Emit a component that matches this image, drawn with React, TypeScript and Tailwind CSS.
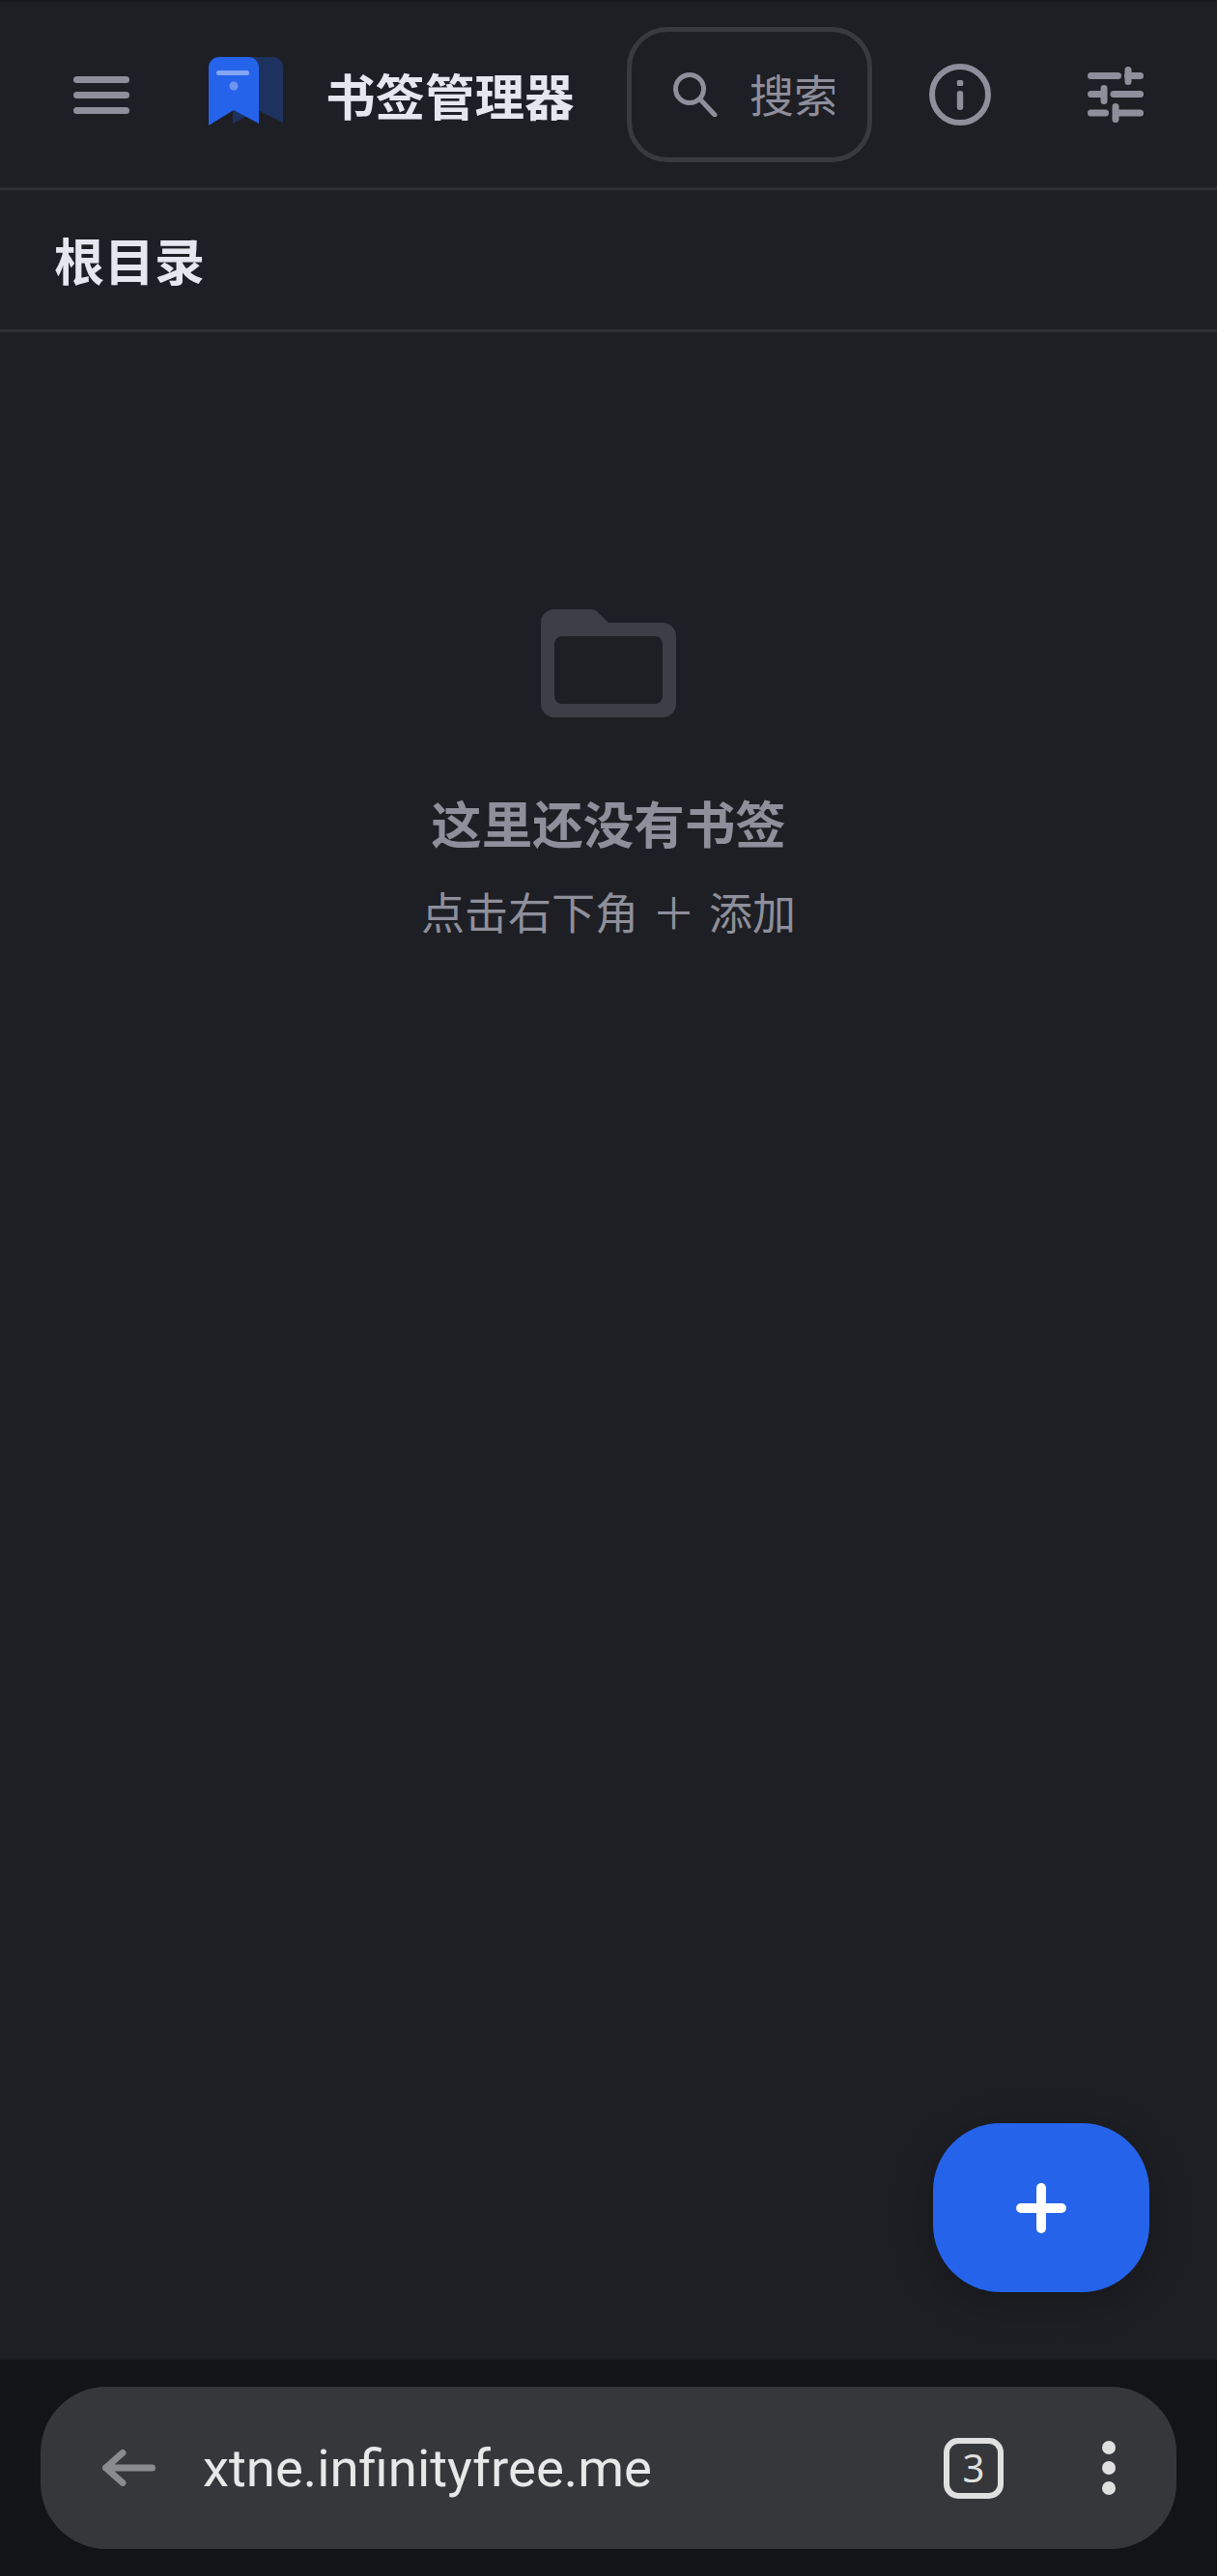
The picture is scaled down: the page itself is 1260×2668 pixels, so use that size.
import { Plus } from 'lucide-react'

const cjk = "font-['Noto_Sans_CJK_SC','Noto_Sans',sans-serif]"

const MenuButton = () => (
  <div className="flex flex-col gap-[9px] w-[58px] shrink-0">
    <div className="h-[7px] rounded-full bg-[#8e8f9b]" />
    <div className="h-[7px] rounded-full bg-[#8e8f9b]" />
    <div className="h-[7px] rounded-full bg-[#8e8f9b]" />
  </div>
)

const Logo = () => (
  <svg width="77" height="71" viewBox="0 0 77 71" className="shrink-0">
    <path d="M25 10A10 10 0 0 1 35 0h32a10 10 0 0 1 10 10v58L51 55 25 69z" fill="#1e3260" />
    <path d="M0 11A11 11 0 0 1 11 0h30a11 11 0 0 1 11 11v58L26 55 0 71z" fill="#2563eb" />
    <rect x="8" y="14" width="34" height="5" rx="2.500" fill="#85a5f5" />
    <circle cx="26" cy="30" r="4.500" fill="#6f94f0" />
  </svg>
)

const SearchIcon = () => (
  <svg width="46" height="46" viewBox="0 0 46 46" fill="none" stroke="#8e8f9b" strokeWidth="5" strokeLinecap="round" className="shrink-0">
    <circle cx="17" cy="17" r="14.500" />
    <path d="M28 28l15 16" />
  </svg>
)

const InfoIcon = () => (
  <svg width="64" height="64" viewBox="0 0 64 64" fill="none" className="shrink-0">
    <circle cx="32" cy="32" r="29" stroke="#8e8f9b" strokeWidth="6" />
    <rect x="28.800" y="17" width="6.400" height="6" rx="1.500" fill="#8e8f9b" />
    <rect x="28.800" y="28" width="6.400" height="20" rx="3.200" fill="#8e8f9b" />
  </svg>
)

const TuneIcon = () => (
  <svg width="58" height="58" viewBox="0 0 58 58" fill="none" stroke="#8e8f9b" strokeWidth="7" strokeLinecap="round" className="shrink-0">
    <path d="M3.500 9.500h28M41.500 9.500h13M3.500 28.500h13M27 28.500h27.500M3.500 48h15M32 48h22.500" />
    <path d="M42 3.500v12M17 22.500v13M29 41.500v13" />
  </svg>
)

const FolderIcon = () => (
  <svg width="140" height="112" viewBox="0 0 140 112" className="block">
    <path
      fillRule="evenodd"
      d="M14 0h37a12 12 0 0 1 9 4l10 10h56a14 14 0 0 1 14 14v70a14 14 0 0 1-14 14H14a14 14 0 0 1-14-14V14A14 14 0 0 1 14 0zM22 28a8 8 0 0 0-8 8v54a8 8 0 0 0 8 8h96a8 8 0 0 0 8-8V36a8 8 0 0 0-8-8z"
      fill="#3d3e46"
    />
  </svg>
)

const BackArrow = () => (
  <svg width="55" height="38" viewBox="0 0 55 38" fill="none" stroke="#8a8b8d" strokeWidth="7" strokeLinecap="round" strokeLinejoin="round" className="shrink-0">
    <path d="M51.500 19H3.500M21 3.500L3.500 19 21 34.500" />
  </svg>
)

const Header = () => (
  <header className="h-[195px] shrink-0 flex items-center border-b-[3px] border-[#2e2f35] pl-[76px]">
    <MenuButton />
    <div className="ml-[82px] mb-[7px]">
      <Logo />
    </div>
    <h1 className="ml-[44px] w-[261px] shrink-0 text-[51.500px] leading-[64px] font-bold text-[#e6e6ee] whitespace-nowrap">书签管理器</h1>
    <div className="ml-[51px] h-[140px] w-[254px] shrink-0 flex items-center rounded-[42px] border-[5px] border-[#383a40] pl-[43px]">
      <SearchIcon />
      <div className="ml-[33px] mb-[5px] w-[88px] overflow-hidden text-[46px] leading-[56px] text-[#8e8f9b] whitespace-nowrap">搜索</div>
    </div>
    <div className="ml-[59px]">
      <InfoIcon />
    </div>
    <div className="ml-[100px]">
      <TuneIcon />
    </div>
  </header>
)

const EmptyState = () => (
  <div className="flex flex-col items-center pt-[287px]">
    <FolderIcon />
    <h2 className="mt-[72px] text-[52.500px] leading-[72px] font-bold text-[#8e8f9b]">这里还没有书签</h2>
    <p className="mt-[27px] text-[45px] leading-[60px] text-[#8e8f9b] whitespace-pre [word-spacing:4px]">点击右下角 ＋ 添加</p>
  </div>
)

const BrowserBar = () => (
  <div className="h-[224px] shrink-0 bg-[#131415] pl-[42px] pr-[42px] pt-[28px]">
    <div className="h-[168px] rounded-[68px] bg-[#36373a] flex items-center pl-[64px] pr-[63px]">
      <BackArrow />
      <span className="ml-[49px] flex-1 font-['Roboto',sans-serif] text-[54.500px] leading-[64px] text-[#e8e8e8] whitespace-nowrap">
        xtne.infinityfree.me
      </span>
      <div className="w-[62px] h-[63px] rounded-[15px] border-[6px] border-[#e0e0e0] flex items-center justify-center font-['Noto_Sans',sans-serif] text-[40px] leading-none text-[#e0e0e0]">
        3
      </div>
      <div className="ml-[102px] flex flex-col gap-[7px]">
        <div className="w-[14px] h-[14px] rounded-full bg-[#e0e0e0]" />
        <div className="w-[14px] h-[14px] rounded-full bg-[#e0e0e0]" />
        <div className="w-[14px] h-[14px] rounded-full bg-[#e0e0e0]" />
      </div>
    </div>
  </div>
)

export default function App() {
  return (
    <div className={`relative h-[2668px] w-[1260px] flex flex-col overflow-hidden bg-[#1e1f24] border-t-2 border-[#16171d] ${cjk}`}>
      <Header />
      <div className="h-[147px] shrink-0 flex items-center border-b-[3px] border-[#2e2f35] pl-[56px]">
        <h2 className="text-[52px] leading-[64px] font-bold text-[#e6e6ee]">根目录</h2>
      </div>
      <main className="flex-1">
        <EmptyState />
      </main>
      <BrowserBar />
      <button className="absolute left-[966px] top-[2197px] w-[224px] h-[175px] rounded-[70px] bg-[#2563eb] flex items-center justify-center shadow-[0_10px_40px_rgba(0,0,0,0.25)]">
        <Plus size={72} color="#ffffff" strokeWidth={3.3} />
      </button>
    </div>
  )
}
